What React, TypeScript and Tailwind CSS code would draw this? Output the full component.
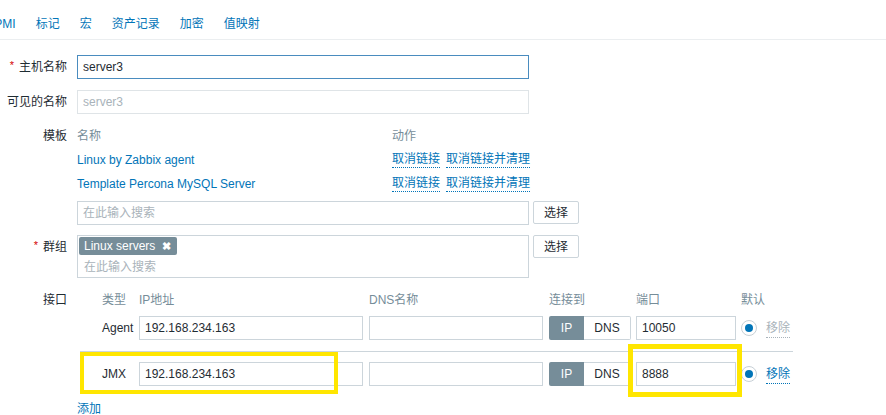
import React from "react";

const tabs = ["IPMI", "标记", "宏", "资产记录", "加密", "值映射"];

function Label({ text, required, lh = "leading-[24px]" }: { text: string; required?: boolean; lh?: string }) {
  return (
    <div className={"text-right whitespace-nowrap " + lh}>
      {required && <span className="relative -top-[2px] mr-[5px] text-[11px] text-[#d40000]">*</span>}
      {text}
    </div>
  );
}

function SelectButton() {
  return (
    <button className="h-[23px] w-[46px] rounded-[2px] border border-[#ccd5db] bg-white text-[12px] text-[#1f2c33]">
      选择
    </button>
  );
}

function Radio() {
  return (
    <span className="flex h-[16px] w-[16px] items-center justify-center rounded-full border border-[#c7d0d6] bg-white">
      <span className="h-[8px] w-[8px] rounded-full bg-[#0275b8]" />
    </span>
  );
}

function InterfaceRow({ type, ip, port, removable }: { type: string; ip: string; port: string; removable: boolean }) {
  return (
    <div className="flex h-[24px] items-center">
      <div className="w-[62px] pl-[25px]">{type}</div>
      <input
        readOnly
        value={ip}
        className="h-[24px] w-[224px] border border-[#ccd5db] px-[5px] text-[12px] text-[#1f2c33] outline-none"
      />
      <input readOnly value="" className="ml-[6px] h-[24px] w-[174px] border border-[#ccd5db] outline-none" />
      <div className="ml-[6px] flex h-[24px]">
        <span className="flex w-[35px] items-center justify-center rounded-l-[2px] bg-[#768d99] text-white">IP</span>
        <span className="flex w-[47px] items-center justify-center rounded-r-[2px] border border-l-0 border-[#ccd5db] bg-white">
          DNS
        </span>
      </div>
      <input
        readOnly
        value={port}
        className="ml-[5px] h-[24px] w-[100px] border border-[#ccd5db] px-[5px] text-[12px] text-[#1f2c33] outline-none"
      />
      <span className="ml-[5px]">
        <Radio />
      </span>
      <span
        className={
          "ml-[9px] border-b border-dotted " +
          (removable ? "border-[#0275b8] text-[#0275b8]" : "border-[#a9b3ba] text-[#a9b3ba]")
        }
      >
        移除
      </span>
    </div>
  );
}

export default function App() {
  return (
    <div className="relative h-[415px] w-[886px] overflow-hidden bg-white font-['Liberation_Sans','Noto_Sans_CJK_SC',sans-serif] text-[12px] text-[#1f2c33]">
      {/* tab strip */}
      <nav className="flex h-[40px] items-center gap-5 border-b border-[#ebeef0] pt-2">
        {tabs.map((t, i) => (
          <span key={t} className={"text-[#0275b8] " + (i === 0 ? "-ml-[9px]" : "")}>
            {t}
          </span>
        ))}
      </nav>

      <div className="pt-[15px]">
        {/* host name */}
        <div className="grid grid-cols-[67px_1fr] gap-x-[10px]">
          <Label text="主机名称" required />
          <input
            readOnly
            value="server3"
            className="h-[24px] w-[452px] border border-[#4a8cbf] px-[5px] text-[12px] text-[#1f2c33] outline-none"
          />
        </div>

        {/* visible name */}
        <div className="mt-[11px] grid grid-cols-[67px_1fr] gap-x-[10px]">
          <Label text="可见的名称" />
          <input
            readOnly
            placeholder="server3"
            className="h-[24px] w-[452px] border border-[#dfe4e7] px-[5px] text-[12px] outline-none placeholder:text-[#a9b3ba]"
          />
        </div>

        {/* templates */}
        <div className="mt-[10px] grid grid-cols-[67px_1fr] gap-x-[10px]">
          <Label text="模板" />
          <div>
            <div className="flex h-[24px] items-center text-[#768d99]">
              <span className="w-[315px]">名称</span>
              <span>动作</span>
            </div>
            {["Linux by Zabbix agent", "Template Percona MySQL Server"].map((name) => (
              <div key={name} className="flex h-[24px] items-center">
                <span className="w-[315px] text-[#0275b8]">{name}</span>
                <span className="border-b border-dotted border-[#0275b8] leading-[15px] text-[#0275b8]">取消链接</span>
                <span className="ml-[6px] border-b border-dotted border-[#0275b8] leading-[15px] text-[#0275b8]">
                  取消链接并清理
                </span>
              </div>
            ))}
            <div className="mt-[5px] flex items-start gap-[4px]">
              <input
                readOnly
                placeholder="在此输入搜索"
                className="h-[24px] w-[452px] border border-[#ccd5db] px-[5px] text-[12px] outline-none placeholder:text-[#a9b3ba]"
              />
              <SelectButton />
            </div>
          </div>
        </div>

        {/* host groups */}
        <div className="mt-[10px] grid grid-cols-[67px_1fr] gap-x-[10px]">
          <Label text="群组" required />
          <div className="flex items-start gap-[4px]">
            <div className="flex h-[43px] w-[452px] flex-col items-start border border-[#ccd5db] p-[1px]">
              <span className="flex h-[18px] items-center gap-[7px] rounded-[2px] bg-[#768d99] pl-[5px] pr-[6px] text-white">
                Linux servers
                <span className="text-[11px] font-bold leading-none">✖</span>
              </span>
              <span className="pl-[5px] pt-[4px] leading-[17px] text-[#a9b3ba]">在此输入搜索</span>
            </div>
            <SelectButton />
          </div>
        </div>

        {/* interfaces */}
        <div className="mt-[11px] grid grid-cols-[67px_1fr] gap-x-[10px]">
          <Label text="接口" lh="leading-[22px]" />
          <div>
            <div className="flex h-[22px] items-center text-[#768d99]">
              <span className="w-[62px] pl-[25px]">类型</span>
              <span className="w-[224px]">IP地址</span>
              <span className="ml-[6px] w-[174px]">DNS名称</span>
              <span className="ml-[6px] w-[82px]">连接到</span>
              <span className="ml-[5px] w-[100px]">端口</span>
              <span className="ml-[5px]">默认</span>
            </div>
            <div className="mt-[5px]">
              <InterfaceRow type="Agent" ip="192.168.234.163" port="10050" removable={false} />
            </div>
            <div className="ml-[3px] mt-[11px] h-px w-[713px] bg-[#ccd5db]" />
            <div className="mt-[10px]">
              <InterfaceRow type="JMX" ip="192.168.234.163" port="8888" removable />
            </div>
            <div className="mt-[16px] leading-[14px] text-[#0275b8]">添加</div>
          </div>
        </div>
      </div>

      {/* highlight frames drawn over the JMX row */}
      <div className="pointer-events-none absolute left-[80px] top-[352px] h-[42px] w-[258px] border-[4px] border-[#ffe600]" />
      <div className="pointer-events-none absolute left-[628px] top-[344px] h-[53px] w-[114px] border-[5px] border-[#ffe600]" />
    </div>
  );
}
